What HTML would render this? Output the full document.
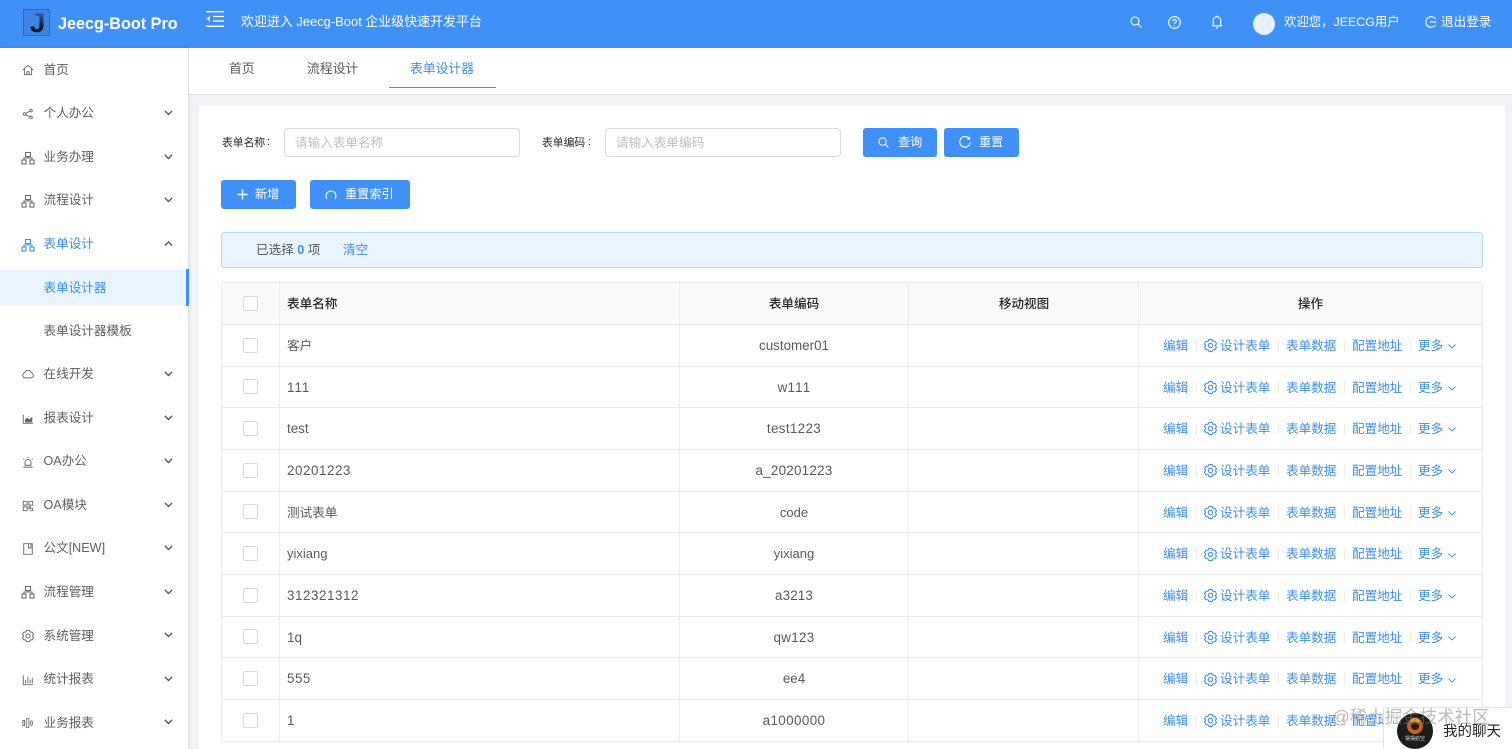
<!DOCTYPE html>
<html lang="zh"><head><meta charset="utf-8"><title>Jeecg-Boot Pro</title>
<style>
*{box-sizing:border-box}
html,body{margin:0;padding:0;width:1512px;height:749px;overflow:hidden;background:#f0f2f5;font-family:"Liberation Sans","Noto Sans CJK SC",sans-serif;font-size:12.6px;color:#595959}
body{position:relative;font-kerning:none}
.a{position:absolute;white-space:nowrap}
svg{position:absolute;fill:none;stroke:currentColor;stroke-width:1.1;overflow:visible}
#hd{position:absolute;left:0;top:0;width:1512px;height:48px;background:#3f90f7;color:#fff}
#sd{position:absolute;left:0;top:48px;width:188px;height:701px;background:#fff;box-shadow:1px 0 3px rgba(0,0,0,.1)}
.m{position:absolute;left:43.5px;height:20px;line-height:20px;white-space:nowrap;color:#5f5f5f}
.ic{position:absolute;left:22px;width:12px;height:12px;margin-top:1px;color:#6a6a6a}
.ch{position:absolute;left:163.5px;width:9px;height:5.400px;color:#555}
.btn{position:absolute;height:29px;background:#3f90f7;border-radius:3px;color:#fff;line-height:28px;font-size:12.2px}
.row{position:absolute;left:221px;width:1262px;height:42px;border-bottom:1px solid #ebebeb}
.cb{position:absolute;left:22px;top:13px;width:15px;height:15px;border:1px solid #d9d9d9;border-radius:2px;background:#fff}
.n{position:absolute;left:66px;top:11.4px;line-height:20px;white-space:nowrap}
.c{position:absolute;left:458px;width:230px;top:11.4px;line-height:20px;text-align:center}
.t{font-size:13.4px}
.l{position:absolute;top:11.4px;line-height:20px;color:#3f8fe8;white-space:nowrap}
.s{position:absolute;top:15px;width:1px;height:12px;background:#ececec}
.g{position:absolute;left:983px;top:14.500px;width:13px;height:13px;color:#3f8fe8;stroke-linejoin:round}
.d{position:absolute;left:1227px;top:19.500px;width:8px;height:5px;color:#3f8fe8}
</style></head><body>
<svg width="0" height="0" style="position:absolute"><defs>
<g id="clu"><rect x="4.500" y="1.500" width="5" height="4"/><rect x="1" y="9" width="4" height="4"/><rect x="9" y="9" width="4" height="4"/><path d="M3 9V7h8v2M7 5.500V7"/></g>
<g id="chd"><path d="M1 1l4 4 4-4" stroke-width="1.500"/></g>
<g id="gear"><path stroke-linejoin="round" d="M5.110.46H7.890L8.950 2.260 11.030 2.270 12.430 4.690 11.400 6.500 12.430 8.310 11.030 10.730 8.950 10.740 7.890 12.540H5.110L4.050 10.740 1.970 10.730.57 8.310 1.600 6.500.57 4.690 1.970 2.270 4.050 2.260z"/><circle cx="6.500" cy="6.500" r="2.200"/></g>
<g id="dn"><path d="M.5.500l3.500 3.500 3.500-3.500" stroke-width=".9"/></g>
</defs></svg>

<div id="hd">
<div class="a" style="left:23px;top:9px;width:27px;height:27px;background:#3f84e0;border:1px solid #2f69b5"></div>
<div class="a" style="left:29px;top:8px;width:17px;height:30px;font:bold 28px/30px 'Liberation Sans',sans-serif;text-align:center;background:linear-gradient(180deg,#3a70b8 10%,#0d1a2e 60%);-webkit-background-clip:text;background-clip:text;color:transparent">J</div>
<div class="a" style="left:58px;top:13px;font:bold 16.200px/22px 'Liberation Sans',sans-serif;color:#fff">Jeecg-Boot Pro</div>
<svg style="left:206px;top:11px;color:#fff" width="18" height="16" viewBox="0 0 18 16"><path d="M0 .7h18M7 5.500h11M7 10h11M0 15.300h18" stroke-width="1.300"/><path d="M4 5L.5 7.700 4 10.400z" fill="#fff" stroke="none"/></svg>
<div class="a" style="left:241px;top:12px;line-height:20px;font-size:12.950px;color:#fff">欢迎进入 Jeecg-Boot 企业级快速开发平台</div>
<svg style="left:1130px;top:16px;color:#fff" width="12" height="12" viewBox="0 0 12 12"><circle cx="5" cy="5" r="4"/><path d="M8 8l3.500 3.500"/></svg>
<svg style="left:1168px;top:16px;color:#fff" width="13" height="13" viewBox="0 0 13 13"><circle cx="6.500" cy="6.500" r="5.800"/><path d="M4.800 5.200a1.700 1.700 0 1 1 2.500 1.500c-.6.300-.8.700-.8 1.300M6.500 9.300v.9"/></svg>
<svg style="left:1211px;top:15px;color:#fff" width="12" height="14" viewBox="0 0 12 14"><path d="M1 10.800h10M2.200 10.800V5.500a3.800 3.800 0 0 1 7.600 0v5.300M6 1.700V.5M4.800 12.800h2.400"/></svg>
<div class="a" style="left:1253px;top:13px;width:22px;height:22px;border-radius:50%;background:#e6f1fe"></div>
<div class="a" style="left:1284px;top:12px;line-height:20px;font-size:12.400px;color:#fff">欢迎您，JEECG用户</div>
<svg style="left:1425px;top:16px;color:#fff" width="12" height="12" viewBox="0 0 12 12"><path d="M10.500 3A5.300 5.300 0 1 0 10.500 9M5 6h6.500"/></svg>
<div class="a" style="left:1441px;top:12px;line-height:20px;font-size:12.600px;color:#fff">退出登录</div>
</div>

<div id="sd">
<svg class="ic" style="top:15px" viewBox="0 0 14 14"><path d="M1 7l6-5.500L13 7M2.800 5.700V12.500h8.400V5.700M5.700 12.500V9h2.600v3.500"/></svg><div class="m" style="top:11.500px">首页</div>
<svg class="ic" style="top:59px" viewBox="0 0 14 14"><circle cx="3" cy="7" r="1.500"/><circle cx="10.500" cy="3" r="1.500"/><circle cx="10.500" cy="11" r="1.500"/><path d="M4.300 6.200l5-2.500M4.300 7.800l5 2.500"/></svg><div class="m" style="top:55px">个人办公</div><svg class="ch" style="top:62px" viewBox="0 0 10 6"><use href="#chd"/></svg>
<svg class="ic" style="top:103px" viewBox="1 1 12 12"><use href="#clu"/></svg><div class="m" style="top:99px">业务办理</div><svg class="ch" style="top:106px" viewBox="0 0 10 6"><use href="#chd"/></svg>
<svg class="ic" style="top:146px" viewBox="1 1 12 12"><use href="#clu"/></svg><div class="m" style="top:142px">流程设计</div><svg class="ch" style="top:149px" viewBox="0 0 10 6"><use href="#chd"/></svg>
<svg class="ic" style="top:190px;color:#3f8fe8" viewBox="1 1 12 12"><use href="#clu"/></svg><div class="m" style="top:186px;color:#3f8fe8">表单设计</div><svg class="ch" style="top:193px" viewBox="0 0 10 6"><path d="M1 5l4-4 4 4" stroke-width="1.500"/></svg>
<div class="a" style="left:0;top:222px;width:188px;height:35px;background:#e8f4ff"></div>
<div class="a" style="left:186px;top:221px;width:2.500px;height:37px;background:#3f90f7"></div>
<div class="m" style="top:229.500px;color:#3f8fe8">表单设计器</div>
<div class="m" style="top:273px">表单设计器模板</div>
<svg class="ic" style="top:319px" viewBox="0 0 14 14"><path d="M3.500 11.500a2.900 2.900 0 0 1-.4-5.700 4.100 4.100 0 0 1 7.900 0 2.900 2.900 0 0 1-.4 5.700z"/></svg><div class="m" style="top:316px">在线开发</div><svg class="ch" style="top:323px" viewBox="0 0 10 6"><use href="#chd"/></svg>
<svg class="ic" style="top:364px" viewBox="0 0 14 14"><path d="M1.500 2v10h11.500"/><path d="M3.500 11V7.500l2.500-2 2.500 2L12 4.500V11z" fill="#666" stroke="none"/></svg><div class="m" style="top:360px">报表设计</div><svg class="ch" style="top:367px" viewBox="0 0 10 6"><use href="#chd"/></svg>
<svg class="ic" style="top:407px" viewBox="0 0 14 14"><path d="M1.500 13h11M3.500 10.800V7.500a3.500 3.500 0 0 1 7 0v3.300zM7 1v1.500M1.500 3l1.200 1.200M12.500 3l-1.200 1.200"/></svg><div class="m" style="top:403px">OA办公</div><svg class="ch" style="top:410px" viewBox="0 0 10 6"><use href="#chd"/></svg>
<svg class="ic" style="top:451px" viewBox="0 0 14 14"><path d="M1.500 1.500h4.500v4.500H1.500zM8 1.500h4.500v4.500H8zM1.500 8h4.500v4.500H1.500zM8 8h2v2H8zM11 10h1.500v2.500H9"/></svg><div class="m" style="top:447px">OA模块</div><svg class="ch" style="top:454px" viewBox="0 0 10 6"><use href="#chd"/></svg>
<svg class="ic" style="top:494px" viewBox="0 0 14 14"><path d="M2 .8h10v12.400H2zM7.500.8v5h3V.8"/></svg><div class="m" style="top:490px">公文[NEW]</div><svg class="ch" style="top:497px" viewBox="0 0 10 6"><use href="#chd"/></svg>
<svg class="ic" style="top:537px" viewBox="1 1 12 12"><use href="#clu"/></svg><div class="m" style="top:534px">流程管理</div><svg class="ch" style="top:541px" viewBox="0 0 10 6"><use href="#chd"/></svg>
<svg class="ic" style="top:581px" viewBox="0 0 13 13"><use href="#gear"/></svg><div class="m" style="top:577.500px">系统管理</div><svg class="ch" style="top:584px" viewBox="0 0 10 6"><use href="#chd"/></svg>
<svg class="ic" style="top:625px" viewBox="0 0 14 14"><path d="M1.500 1.500v11h11.500M4 11V7M6.800 11V3.500M9.500 11V6.500M12 11V4.500"/></svg><div class="m" style="top:621px">统计报表</div><svg class="ch" style="top:628px" viewBox="0 0 10 6"><use href="#chd"/></svg>
<svg class="ic" style="top:668px" viewBox="0 0 14 14"><path d="M1 4v6h2V4zM5 2v10h3V2zM11 4.500a1.400 2.500 0 1 0 .1 0z" stroke-width="1"/></svg><div class="m" style="top:664.500px">业务报表</div><svg class="ch" style="top:671px" viewBox="0 0 10 6"><use href="#chd"/></svg>
</div>

<!-- tabs -->
<div class="a" style="left:189px;top:48px;width:1323px;height:47px;background:#fff;border-bottom:1px solid #e1e1e1"></div>
<div class="a" style="left:229px;top:59px;line-height:20px;font-size:12.800px">首页</div>
<div class="a" style="left:307px;top:59px;line-height:20px;font-size:12.800px">流程设计</div>
<div class="a" style="left:410px;top:59px;line-height:20px;font-size:12.800px;color:#3f8fe8">表单设计器</div>
<div class="a" style="left:389px;top:87px;width:107px;height:1px;background:#3f90f7"></div>

<!-- card -->
<div class="a" style="left:199px;top:106px;width:1306px;height:643px;background:#fff"></div>
<div class="a" style="left:222px;top:133px;line-height:20px;font-size:10.800px;color:#262626">表单名称</div>
<div class="a" style="left:267px;top:133px;line-height:19px;font-size:10.800px;color:#262626">:</div>
<div class="a" style="left:284px;top:128px;width:236px;height:29px;border:1px solid #dcdcdc;border-radius:4px;background:#fff;padding-left:10px;line-height:28px;color:#bfbfbf">请输入表单名称</div>
<div class="a" style="left:542px;top:133px;line-height:20px;font-size:10.800px;color:#262626">表单编码</div>
<div class="a" style="left:588px;top:133px;line-height:19px;font-size:10.800px;color:#262626">:</div>
<div class="a" style="left:605px;top:128px;width:236px;height:29px;border:1px solid #dcdcdc;border-radius:4px;background:#fff;padding-left:10px;line-height:28px;color:#bfbfbf">请输入表单编码</div>
<div class="btn" style="left:863px;top:128px;width:74px"><svg style="left:15px;top:9px;color:#fff" width="11" height="11" viewBox="0 0 12 12"><circle cx="5" cy="5" r="4"/><path d="M8 8l3.500 3.500"/></svg><span class="a" style="left:35px;top:0">查询</span></div>
<div class="btn" style="left:944px;top:128px;width:75px"><svg style="left:15px;top:8px;color:#fff" width="12" height="12" viewBox="0 0 12 12"><path d="M10.500 3A5.300 5.300 0 1 0 11.300 6.500M10.500.8V3.200H8"/></svg><span class="a" style="left:35px;top:0">重置</span></div>
<div class="btn" style="left:221px;top:180px;width:75px"><svg style="left:16px;top:9px;color:#fff" width="11" height="11" viewBox="0 0 11 11"><path d="M5.500.5v10M.5 5.500h10" stroke-width="1.400"/></svg><span class="a" style="left:34px;top:0">新增</span></div>
<div class="btn" style="left:310px;top:180px;width:100px"><svg style="left:15px;top:9px;color:#fff" width="12" height="12" viewBox="0 0 12 12"><path d="M2 10A5 5 0 1 1 10 10"/></svg><span class="a" style="left:35px;top:0">重置索引</span></div>

<div class="a" style="left:221px;top:232px;width:1262px;height:36px;background:#e8f4ff;border:1px solid #b5daf5;border-radius:3px"></div>
<div class="a" style="left:256px;top:240px;line-height:20px">已选择 <b style="color:#3f8fe8">0</b> 项</div>
<div class="a" style="left:343px;top:240px;line-height:20px;color:#3f8fe8">清空</div>

<!-- table -->
<div class="a" style="left:221px;top:282px;width:1262px;height:460px;border:1px solid #ebebeb;border-radius:3px;background:#fff"></div>
<div class="a" style="left:222px;top:283px;width:1260px;height:42px;background:#fafafa;border-bottom:1px solid #ebebeb"></div>
<div class="row" style="top:283px;border:0"><div class="cb" style="top:13px"></div><div class="n" style="top:11px;color:#262626;font-weight:500">表单名称</div><div class="c" style="top:11px;color:#262626;font-weight:500">表单编码</div><div class="c" style="top:11px;left:688px;color:#262626;font-weight:500">移动视图</div><div class="c" style="top:11px;left:917px;width:345px;color:#262626;font-weight:500">操作</div></div>

<div class="row" style="top:324.500px"><div class="cb"></div><div class="n">客户</div><div class="c t">customer01</div><div class="l" style="left:942px">编辑</div><div class="s" style="left:975px"></div><svg class="g" viewBox="0 0 13 13"><use href="#gear"/></svg><div class="l" style="left:999px">设计表单</div><div class="s" style="left:1057px"></div><div class="l" style="left:1065px">表单数据</div><div class="s" style="left:1123px"></div><div class="l" style="left:1131px">配置地址</div><div class="s" style="left:1189px"></div><div class="l" style="left:1197px">更多</div><svg class="d" viewBox="0 0 8 5"><use href="#dn"/></svg></div>
<div class="row" style="top:366.200px"><div class="cb"></div><div class="n t">111</div><div class="c t" style="letter-spacing:.2px">w111</div><div class="l" style="left:942px">编辑</div><div class="s" style="left:975px"></div><svg class="g" viewBox="0 0 13 13"><use href="#gear"/></svg><div class="l" style="left:999px">设计表单</div><div class="s" style="left:1057px"></div><div class="l" style="left:1065px">表单数据</div><div class="s" style="left:1123px"></div><div class="l" style="left:1131px">配置地址</div><div class="s" style="left:1189px"></div><div class="l" style="left:1197px">更多</div><svg class="d" viewBox="0 0 8 5"><use href="#dn"/></svg></div>
<div class="row" style="top:407.900px"><div class="cb"></div><div class="n t">test</div><div class="c t" style="letter-spacing:.35px">test1223</div><div class="l" style="left:942px">编辑</div><div class="s" style="left:975px"></div><svg class="g" viewBox="0 0 13 13"><use href="#gear"/></svg><div class="l" style="left:999px">设计表单</div><div class="s" style="left:1057px"></div><div class="l" style="left:1065px">表单数据</div><div class="s" style="left:1123px"></div><div class="l" style="left:1131px">配置地址</div><div class="s" style="left:1189px"></div><div class="l" style="left:1197px">更多</div><svg class="d" viewBox="0 0 8 5"><use href="#dn"/></svg></div>
<div class="row" style="top:449.600px"><div class="cb"></div><div class="n t" style="letter-spacing:.55px">20201223</div><div class="c t" style="letter-spacing:.25px">a_20201223</div><div class="l" style="left:942px">编辑</div><div class="s" style="left:975px"></div><svg class="g" viewBox="0 0 13 13"><use href="#gear"/></svg><div class="l" style="left:999px">设计表单</div><div class="s" style="left:1057px"></div><div class="l" style="left:1065px">表单数据</div><div class="s" style="left:1123px"></div><div class="l" style="left:1131px">配置地址</div><div class="s" style="left:1189px"></div><div class="l" style="left:1197px">更多</div><svg class="d" viewBox="0 0 8 5"><use href="#dn"/></svg></div>
<div class="row" style="top:491.300px"><div class="cb"></div><div class="n">测试表单</div><div class="c" style="font-size:13px">code</div><div class="l" style="left:942px">编辑</div><div class="s" style="left:975px"></div><svg class="g" viewBox="0 0 13 13"><use href="#gear"/></svg><div class="l" style="left:999px">设计表单</div><div class="s" style="left:1057px"></div><div class="l" style="left:1065px">表单数据</div><div class="s" style="left:1123px"></div><div class="l" style="left:1131px">配置地址</div><div class="s" style="left:1189px"></div><div class="l" style="left:1197px">更多</div><svg class="d" viewBox="0 0 8 5"><use href="#dn"/></svg></div>
<div class="row" style="top:533px"><div class="cb"></div><div class="n" style="font-size:13px">yixiang</div><div class="c" style="font-size:13px">yixiang</div><div class="l" style="left:942px">编辑</div><div class="s" style="left:975px"></div><svg class="g" viewBox="0 0 13 13"><use href="#gear"/></svg><div class="l" style="left:999px">设计表单</div><div class="s" style="left:1057px"></div><div class="l" style="left:1065px">表单数据</div><div class="s" style="left:1123px"></div><div class="l" style="left:1131px">配置地址</div><div class="s" style="left:1189px"></div><div class="l" style="left:1197px">更多</div><svg class="d" viewBox="0 0 8 5"><use href="#dn"/></svg></div>
<div class="row" style="top:574.700px"><div class="cb"></div><div class="n t" style="letter-spacing:.55px">312321312</div><div class="c t" style="letter-spacing:.15px">a3213</div><div class="l" style="left:942px">编辑</div><div class="s" style="left:975px"></div><svg class="g" viewBox="0 0 13 13"><use href="#gear"/></svg><div class="l" style="left:999px">设计表单</div><div class="s" style="left:1057px"></div><div class="l" style="left:1065px">表单数据</div><div class="s" style="left:1123px"></div><div class="l" style="left:1131px">配置地址</div><div class="s" style="left:1189px"></div><div class="l" style="left:1197px">更多</div><svg class="d" viewBox="0 0 8 5"><use href="#dn"/></svg></div>
<div class="row" style="top:616.400px"><div class="cb"></div><div class="n t">1q</div><div class="c t" style="letter-spacing:.3px">qw123</div><div class="l" style="left:942px">编辑</div><div class="s" style="left:975px"></div><svg class="g" viewBox="0 0 13 13"><use href="#gear"/></svg><div class="l" style="left:999px">设计表单</div><div class="s" style="left:1057px"></div><div class="l" style="left:1065px">表单数据</div><div class="s" style="left:1123px"></div><div class="l" style="left:1131px">配置地址</div><div class="s" style="left:1189px"></div><div class="l" style="left:1197px">更多</div><svg class="d" viewBox="0 0 8 5"><use href="#dn"/></svg></div>
<div class="row" style="top:658.100px"><div class="cb"></div><div class="n t" style="letter-spacing:.5px">555</div><div class="c t">ee4</div><div class="l" style="left:942px">编辑</div><div class="s" style="left:975px"></div><svg class="g" viewBox="0 0 13 13"><use href="#gear"/></svg><div class="l" style="left:999px">设计表单</div><div class="s" style="left:1057px"></div><div class="l" style="left:1065px">表单数据</div><div class="s" style="left:1123px"></div><div class="l" style="left:1131px">配置地址</div><div class="s" style="left:1189px"></div><div class="l" style="left:1197px">更多</div><svg class="d" viewBox="0 0 8 5"><use href="#dn"/></svg></div>
<div class="row" style="top:699.800px"><div class="cb"></div><div class="n t">1</div><div class="c t" style="letter-spacing:.4px">a1000000</div><div class="l" style="left:942px">编辑</div><div class="s" style="left:975px"></div><svg class="g" viewBox="0 0 13 13"><use href="#gear"/></svg><div class="l" style="left:999px">设计表单</div><div class="s" style="left:1057px"></div><div class="l" style="left:1065px">表单数据</div><div class="s" style="left:1123px"></div><div class="l" style="left:1131px">配置地址</div><div class="s" style="left:1189px"></div><div class="l" style="left:1197px">更多</div><svg class="d" viewBox="0 0 8 5"><use href="#dn"/></svg></div>

<div class="a" style="left:279px;top:283px;width:1px;height:458px;background:#eeeeee"></div>
<div class="a" style="left:679px;top:283px;width:1px;height:458px;background:#eeeeee"></div>
<div class="a" style="left:908px;top:283px;width:1px;height:458px;background:#eeeeee"></div>
<div class="a" style="left:1138px;top:283px;width:1px;height:458px;background:#eeeeee"></div>

<!-- chat + watermark -->
<div class="a" style="left:1383px;top:707px;width:129px;height:42px;background:#fff;border-left:1px solid #e4e4e4;border-top:1px solid #e4e4e4"></div>
<div class="a" style="left:1397px;top:713px;width:36px;height:36px;border-radius:50%;background:#1c1c1f;overflow:hidden">
<div class="a" style="left:10px;top:5px;width:16px;height:16px;border-radius:50%;border:4px solid #c9601f;border-top-color:#e8a030;background:#2a1a12"></div>
<div class="a" style="left:8px;top:23px;font-size:5px;line-height:6px;color:#cfcfcf">摆摆航空</div>
</div>
<div class="a" style="left:1443px;top:722px;line-height:20px;font-size:14.500px;color:#222">我的聊天</div>
<div class="a" style="left:1332px;top:706px;line-height:22px;font-size:17.500px;color:rgba(120,120,120,.5)">@稀土掘金技术社区</div>
</body></html>
